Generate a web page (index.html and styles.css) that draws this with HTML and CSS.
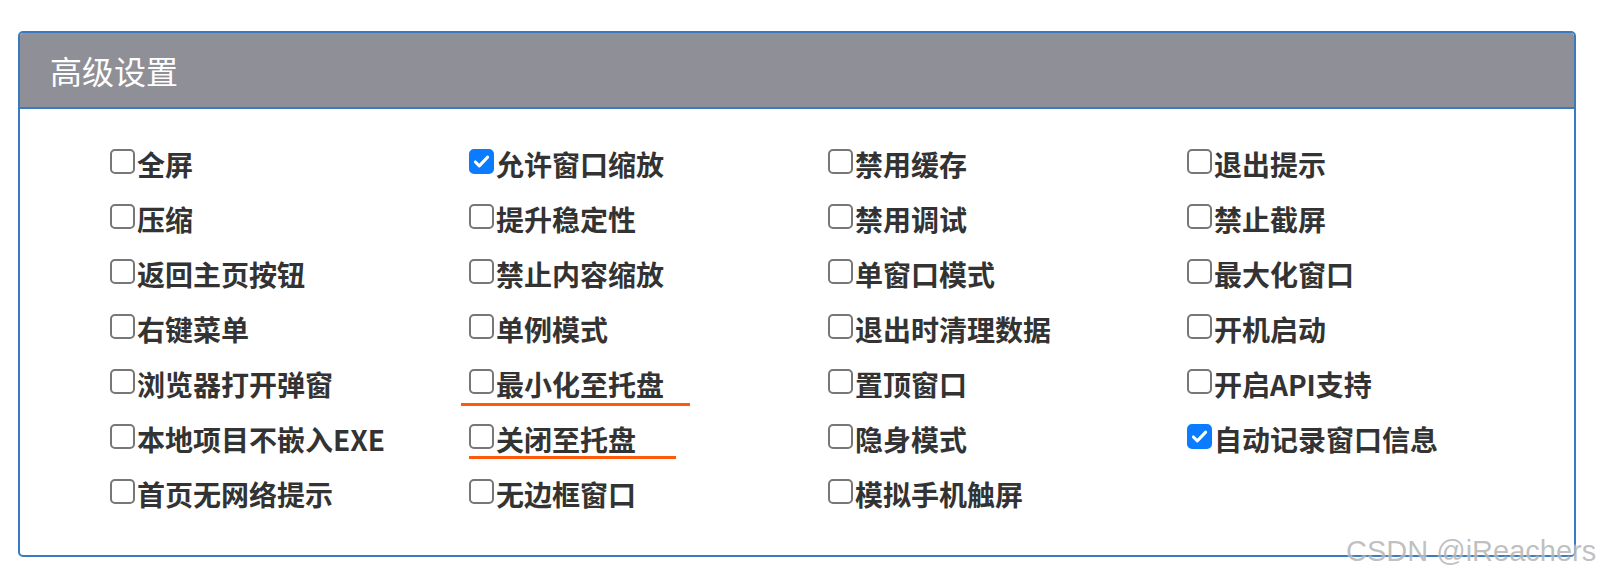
FILE: index.html
```html
<!DOCTYPE html>
<html lang="zh-CN">
<head>
  <meta charset="UTF-8">
  <title>高级设置</title>
  <link rel="stylesheet" href="styles.css">
</head>
<body>
  <div class="panel">
    <div class="panel-heading">高级设置</div>
    <div class="panel-body">
      <label class="option"><span class="box"></span>全屏</label>
      <label class="option"><span class="box checked"><svg viewBox="0 0 24 24"><path d="M5 12.5l4.5 4.5L19 7"/></svg></span>允许窗口缩放</label>
      <label class="option"><span class="box"></span>禁用缓存</label>
      <label class="option"><span class="box"></span>退出提示</label>

      <label class="option"><span class="box"></span>压缩</label>
      <label class="option"><span class="box"></span>提升稳定性</label>
      <label class="option"><span class="box"></span>禁用调试</label>
      <label class="option"><span class="box"></span>禁止截屏</label>

      <label class="option"><span class="box"></span>返回主页按钮</label>
      <label class="option"><span class="box"></span>禁止内容缩放</label>
      <label class="option"><span class="box"></span>单窗口模式</label>
      <label class="option"><span class="box"></span>最大化窗口</label>

      <label class="option"><span class="box"></span>右键菜单</label>
      <label class="option"><span class="box"></span>单例模式</label>
      <label class="option"><span class="box"></span>退出时清理数据</label>
      <label class="option"><span class="box"></span>开机启动</label>

      <label class="option"><span class="box"></span>浏览器打开弹窗</label>
      <label class="option marked mark-1"><span class="box"></span>最小化至托盘</label>
      <label class="option"><span class="box"></span>置顶窗口</label>
      <label class="option"><span class="box"></span>开启API支持</label>

      <label class="option"><span class="box"></span>本地项目不嵌入EXE</label>
      <label class="option marked mark-2"><span class="box"></span>关闭至托盘</label>
      <label class="option"><span class="box"></span>隐身模式</label>
      <label class="option"><span class="box checked"><svg viewBox="0 0 24 24"><path d="M5 12.5l4.5 4.5L19 7"/></svg></span>自动记录窗口信息</label>

      <label class="option"><span class="box"></span>首页无网络提示</label>
      <label class="option"><span class="box"></span>无边框窗口</label>
      <label class="option"><span class="box"></span>模拟手机触屏</label>
    </div>
  </div>

  <div class="watermark">CSDN @iReachers</div>
</body>
</html>
```

FILE: styles.css
```css
:root {
  --border-color: #3a7bbf;
  --heading-bg: #8f8f97;
  --check-blue: #0b7cff;
  --text-color: #333;
  --mark-color: #ff5a0a;
}

body {
  margin: 0;
  font-family: "Noto Sans CJK SC", "Noto Sans", sans-serif;
  background: white;
  color: var(--text-color);
  position: relative;
  min-height: 582px;
  overflow: hidden;
}

.panel {
  margin: 31px 0 0 18px;
  width: 1558px;
  box-sizing: border-box;
  border: 2px solid var(--border-color);
  border-radius: 5px;
  overflow: hidden;
}

.panel-heading {
  background: var(--heading-bg);
  color: white;
  font-size: 32px;
  height: 74px;
  line-height: 74px;
  padding-left: 30px;
  border-bottom: 2px solid var(--border-color);
}

.panel-body {
  display: grid;
  grid-template-columns: repeat(4, 359px);
  grid-auto-rows: 55px;
  padding: 27px 0 34px 90px;
}

.option {
  display: flex;
  align-items: center;
  font-size: 28px;
  font-weight: 700;
  line-height: 1;
  position: relative;
  white-space: nowrap;
}

.box {
  width: 21px;
  height: 21px;
  border: 2px solid #777;
  border-radius: 5px;
  margin-right: 2px;
  margin-top: -5px;
  flex: none;
  display: flex;
  align-items: center;
  justify-content: center;
}

.box.checked {
  background: var(--check-blue);
  border-color: var(--check-blue);
}

.box svg {
  width: 21px;
  height: 21px;
  fill: none;
  stroke: white;
  stroke-width: 3.4;
  stroke-linecap: round;
  stroke-linejoin: round;
}

/* hand-drawn red underlines from the screenshot */
.marked::after {
  content: "";
  position: absolute;
  height: 3px;
  background: var(--mark-color);
}

.mark-1::after {
  left: -8px;
  width: 229px;
  top: 47px;
}

.mark-2::after {
  left: 0;
  width: 207px;
  top: 45px;
}

.watermark {
  position: absolute;
  left: 1346px;
  top: 535px;
  font-family: "Liberation Sans", Arial, sans-serif;
  font-size: 29px;
  color: rgba(150, 150, 150, 0.6);
  text-shadow: 0 0 2px rgba(255, 255, 255, 0.9);
  white-space: nowrap;
}
```
